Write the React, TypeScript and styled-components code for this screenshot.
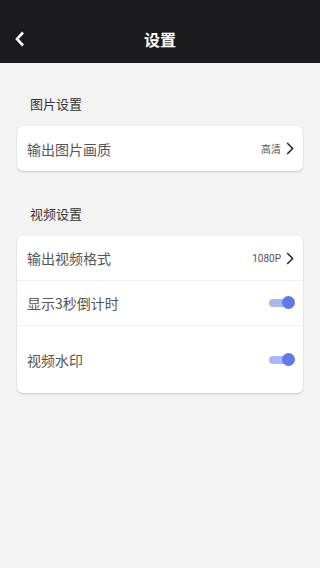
import styled, { createGlobalStyle } from "styled-components";

const GlobalStyle = createGlobalStyle`
  html, body {
    margin: 0;
    padding: 0;
    background: #f3f3f3;
  }
  body {
    font-family: Roboto, "Noto Sans CJK SC", sans-serif;
  }
`;

const Page = styled.div`
  width: 320px;
  min-height: 568px;
  background: #f3f3f3;
  display: flex;
  flex-direction: column;
`;

const Header = styled.header`
  height: 63px;
  background: #1b1b1d;
  display: grid;
  grid-template-columns: 40px 1fr 40px;
  align-items: center;
  padding-top: 14px;
  box-sizing: border-box;
`;

const BackButton = styled.div`
  display: flex;
  align-items: center;
  justify-content: center;
  height: 24px;
`;

const Title = styled.h1`
  margin: 0;
  text-align: center;
  color: #fff;
  font-size: 16px;
  font-weight: 700;
  font-family: "Noto Sans CJK SC", sans-serif;
`;

const Body = styled.main`
  padding: 30px 17px 0 17px;
  display: flex;
  flex-direction: column;
`;

const SectionLabel = styled.div`
  padding-left: 13px;
  font-size: 13px;
  color: #333;
  font-family: "Noto Sans CJK SC", sans-serif;
  height: 22px;
  line-height: 22px;
  margin-bottom: 11px;
`;

const Card = styled.div`
  background: #fff;
  border-radius: 6px;
  box-shadow: 0 1px 2px rgba(0, 0, 0, 0.18);
  margin-bottom: 32px;
`;

const Row = styled.div<{ $tall?: boolean; $last?: boolean }>`
  height: ${(p) => (p.$tall ? 67 : 45)}px;
  display: flex;
  align-items: center;
  justify-content: space-between;
  padding: 0 9px 0 10px;
  border-bottom: ${(p) => (p.$last ? "none" : "1px solid #f0f0f0")};
  box-sizing: border-box;
`;

const RowLabel = styled.span`
  font-size: 14px;
  color: #555;
  font-family: "Noto Sans CJK SC", sans-serif;
`;

const RowRight = styled.div`
  display: flex;
  align-items: center;
  gap: 5px;
`;

const Value = styled.span`
  font-size: 10px;
  color: #555;
  font-family: Roboto, "Noto Sans CJK SC", sans-serif;
  font-weight: 400;
`;

const Toggle = styled.div`
  position: relative;
  width: 26px;
  height: 14px;
  margin-right: -1px;
`;

const Track = styled.div`
  position: absolute;
  left: 0;
  top: 3px;
  width: 22px;
  height: 8px;
  border-radius: 4px;
  background: #a9b6f2;
`;

const Knob = styled.div`
  position: absolute;
  right: 0;
  top: 0;
  width: 13px;
  height: 13px;
  border-radius: 50%;
  background: #5f78ea;
`;

const Chevron = () => (
  <svg width="8" height="13" viewBox="0 0 8 13">
    <path d="M1.2 1 L6.6 6.5 L1.2 12" fill="none" stroke="#222" strokeWidth="1.5" />
  </svg>
);

const Switch = () => (
  <Toggle>
    <Track />
    <Knob />
  </Toggle>
);

export default function App() {
  return (
    <Page>
      <GlobalStyle />
      <Header>
        <BackButton>
          <svg width="12" height="16" viewBox="0 0 12 16">
            <path d="M9 1.5 L3 8 L9 14.5" fill="none" stroke="#fff" strokeWidth="2.6" />
          </svg>
        </BackButton>
        <Title>设置</Title>
        <div />
      </Header>
      <Body>
        <SectionLabel>图片设置</SectionLabel>
        <Card>
          <Row $last>
            <RowLabel>输出图片画质</RowLabel>
            <RowRight>
              <Value>高清</Value>
              <Chevron />
            </RowRight>
          </Row>
        </Card>
        <SectionLabel>视频设置</SectionLabel>
        <Card>
          <Row>
            <RowLabel>输出视频格式</RowLabel>
            <RowRight>
              <Value>1080P</Value>
              <Chevron />
            </RowRight>
          </Row>
          <Row>
            <RowLabel>显示3秒倒计时</RowLabel>
            <Switch />
          </Row>
          <Row $tall $last>
            <RowLabel>视频水印</RowLabel>
            <Switch />
          </Row>
        </Card>
      </Body>
    </Page>
  );
}
